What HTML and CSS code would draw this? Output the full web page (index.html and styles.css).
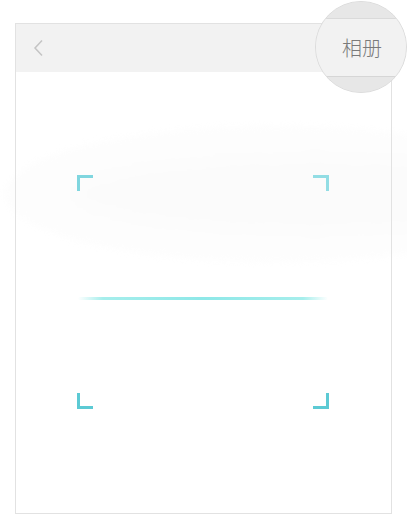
FILE: index.html
```html
<!DOCTYPE html>
<html lang="zh">
<head>
<meta charset="utf-8">
<link rel="stylesheet" href="styles.css">
</head>
<body>
<div class="glow-layer"><div class="glow"><div class="glow-inner"></div></div></div>
<div class="frame">
  <div class="header">
    <svg class="back" width="12" height="18" viewBox="0 0 12 18"><path d="M9 1.5 L2 9 L9 16.5" fill="none" stroke="#c4c4c4" stroke-width="1.5"/></svg>
  </div>
  <div class="body">
    <div class="scan">
      <span class="c tl"></span><span class="c tr"></span>
      <span class="c bl"></span><span class="c br"></span>
      <div class="line"></div>
    </div>
  </div>
</div>
<div class="lens">
  <div class="lens-top"></div>
  <div class="lens-bar">相册</div>
  <div class="lens-bottom"></div>
</div>
</body>
</html>
```
FILE: styles.css
```css
html, body { margin: 0; padding: 0; background: #fff; }
body { font-family: "Noto Sans CJK SC", "Noto Sans", sans-serif; overflow: hidden; width: 407px; height: 515px; position: relative; }
.glow-layer {
  position: absolute;
  left: 0; top: 0;
  width: 407px; height: 515px;
  overflow: hidden;
}
.glow {
  position: absolute;
  left: 5px;
  top: 126px;
  width: 540px;
  height: 136px;
  border-radius: 50%;
  background: #fdfdfd;
  filter: blur(3px);
}
.glow-inner {
  position: absolute;
  left: 70px;
  top: 32px;
  width: 480px;
  height: 72px;
  border-radius: 50%;
  background: #fbfbfb;
  filter: blur(6px);
}
.frame {
  margin: 23px 0 0 15px;
  width: 375px;
  height: 489px;
  border: 1px solid #e2e2e2;
  display: flex;
  flex-direction: column;
  position: relative;
}
.header {
  height: 48px;
  background: #f2f2f2;
  display: flex;
  align-items: center;
  padding-left: 17px;
  flex: none;
}
.back { display: block; }
.body {
  flex: 1;
  padding: 103px 0 0 61px;
}
.scan {
  position: relative;
  width: 252px;
  height: 234px;
}
.c { position: absolute; width: 16px; height: 16px; box-sizing: border-box; }
.tl { left: 0; top: 0; border-top: 3px solid #80d6df; border-left: 3px solid #80d6df; }
.tr { right: 0; top: 0; border-top: 3px solid #92dde4; border-right: 3px solid #92dde4; }
.bl { left: 0; bottom: 0; border-bottom: 3px solid #5ccad4; border-left: 3px solid #5ccad4; }
.br { right: 0; bottom: 0; border-bottom: 3px solid #5ccad4; border-right: 3px solid #5ccad4; }
.line {
  position: absolute;
  left: 1px;
  top: 122px;
  width: 250px;
  height: 3px;
  background: linear-gradient(to right, rgba(142,232,232,0) 0%, #a6eeec 10%, #8ee8e8 50%, #a6eeec 90%, rgba(142,232,232,0) 100%);
  border-radius: 2px;
}
.lens {
  position: absolute;
  left: 315px;
  top: 1px;
  width: 92px;
  height: 92px;
  border-radius: 50%;
  box-sizing: border-box;
  border: 1px solid #dcdcdc;
  overflow: hidden;
  display: flex;
  flex-direction: column;
  background: #e7e7e7;
}
.lens-top { height: 16px; background: #e7e7e7; border-bottom: 1px solid #dadada; flex: none; }
.lens-bar {
  height: 57px;
  background: #f2f2f2;
  flex: none;
  display: flex;
  align-items: center;
  justify-content: center;
  padding-left: 2px;
  font-size: 20px;
  font-weight: 300;
  color: #7a7a7a;
}
.lens-bottom { flex: 1; background: #e7e7e7; border-top: 1px solid #d6d6d6; }
```
